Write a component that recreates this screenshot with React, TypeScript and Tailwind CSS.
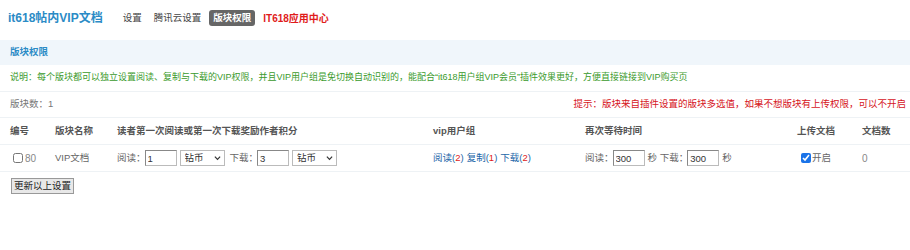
import React from 'react';

const font = { fontFamily: '"Liberation Sans", "Noto Sans CJK SC", sans-serif' };

const TopNav: React.FC = () => (
  <div className="flex items-center h-[36px] pl-[8px]">
    <span className="text-[12px] font-bold text-[#2b8bc6] mr-[14px]">it618帖内VIP文档</span>
    <span className="text-[9.5px] text-[#444] px-[6px]">设置</span>
    <span className="text-[9.5px] text-[#444] px-[6px]">腾讯云设置</span>
    <span className="text-[9.5px] text-white bg-[#666] rounded-[3px] px-[4px] py-[1px] mx-[2px] font-bold">版块权限</span>
    <span className="text-[10px] text-[#e01b1b] font-bold px-[6px]">IT618应用中心</span>
  </div>
);

const NumLink: React.FC<{ label: string; n: number }> = ({ label, n }) => (
  <span className="text-[#2366a8]">
    {label}(<span className="text-[#e02020]">{n}</span>)
  </span>
);

const CoinSelect: React.FC = () => (
  <span className="relative inline-flex ml-[3px]">
    <select className="appearance-none h-[16px] w-[45px] border border-[#bbb] bg-white text-[9.5px] text-[#333] pl-[4px] pr-[12px]">
      <option>钻币</option>
    </select>
    <svg className="absolute right-[4px] top-[5px] w-[7px] h-[6px] pointer-events-none" viewBox="0 0 8 6">
      <path d="M1 1.5 L4 4.5 L7 1.5" fill="none" stroke="#333" strokeWidth="1.4" />
    </svg>
  </span>
);

const NumInput: React.FC<{ v: string }> = ({ v }) => (
  <input
    defaultValue={v}
    className="w-[32px] h-[16px] border border-[#bbb] border-t-[#888] border-l-[#888] text-[9.5px] text-[#333] px-[2px]"
  />
);

const cols = 'grid grid-cols-[45px_62px_316px_152px_212px_65px_1fr] h-[27px] items-center pl-[10px] border-b border-[#eef2f5]';

const App: React.FC = () => {
  return (
    <div className="w-[910px] h-[250px] bg-white text-[9.5px] text-[#555]" style={font}>
      <TopNav />

      <div className="mt-[4px] h-[25px] bg-[#f0f6fb] flex items-center pl-[10px] text-[9.5px] font-bold text-[#2b8bc6]">
        版块权限
      </div>

      <div className="h-[27px] flex items-center pl-[10px] text-[9px] text-[#3a9a2c] border-b border-[#eef2f5]">
        说明：每个版块都可以独立设置阅读、复制与下载的VIP权限，并且VIP用户组是免切换自动识别的，能配合“it618用户组VIP会员”插件效果更好，方便直接链接到VIP购买页
      </div>

      <div className="h-[26px] flex items-center justify-between pl-[10px] pr-[4px] border-b border-[#eef2f5]">
        <span className="text-[#777]">版块数：1</span>
        <span className="text-[#d6141c]">提示：版块来自插件设置的版块多选值，如果不想版块有上传权限，可以不开启</span>
      </div>

      <div className={`${cols} font-bold text-[#555]`}>
        <span>编号</span>
        <span>版块名称</span>
        <span>读者第一次阅读或第一次下载奖励作者积分</span>
        <span>vip用户组</span>
        <span>再次等待时间</span>
        <span>上传文档</span>
        <span>文档数</span>
      </div>

      <div className={`${cols} text-[#666]`}>
        <span className="flex items-center gap-[2px] pl-[3px]">
          <input type="checkbox" className="w-[10px] h-[10px] m-0" />
          <span className="text-[#888] text-[10px]">80</span>
        </span>
        <span>VIP文档</span>
        <span className="flex items-center">
          <span className="-mr-[1px]">阅读：</span>
          <NumInput v="1" />
          <CoinSelect />
          <span className="ml-[5px] -mr-[1px]">下载：</span>
          <NumInput v="3" />
          <CoinSelect />
        </span>
        <span className="flex gap-[3px]">
          <NumLink label="阅读" n={2} />
          <NumLink label="复制" n={1} />
          <NumLink label="下载" n={2} />
        </span>
        <span className="flex items-center">
          <span className="-mr-[1px]">阅读：</span>
          <NumInput v="300" />
          <span className="ml-[3px] -mr-[1px]">秒 下载：</span>
          <NumInput v="300" />
          <span className="ml-[3px]">秒</span>
        </span>
        <span className="flex items-center gap-[1px] pl-[4px]">
          <input type="checkbox" defaultChecked className="w-[10px] h-[10px] m-0 accent-[#1a73e8]" />
          开启
        </span>
        <span className="text-[#888] text-[10px]">0</span>
      </div>

      <div className="pl-[11px] pt-[6px]">
        <button className="h-[16px] px-[2px] border border-[#999] bg-[#e8e8e8] text-[9.5px] text-[#222] leading-none">
          更新以上设置
        </button>
      </div>
    </div>
  );
};

export default App;
